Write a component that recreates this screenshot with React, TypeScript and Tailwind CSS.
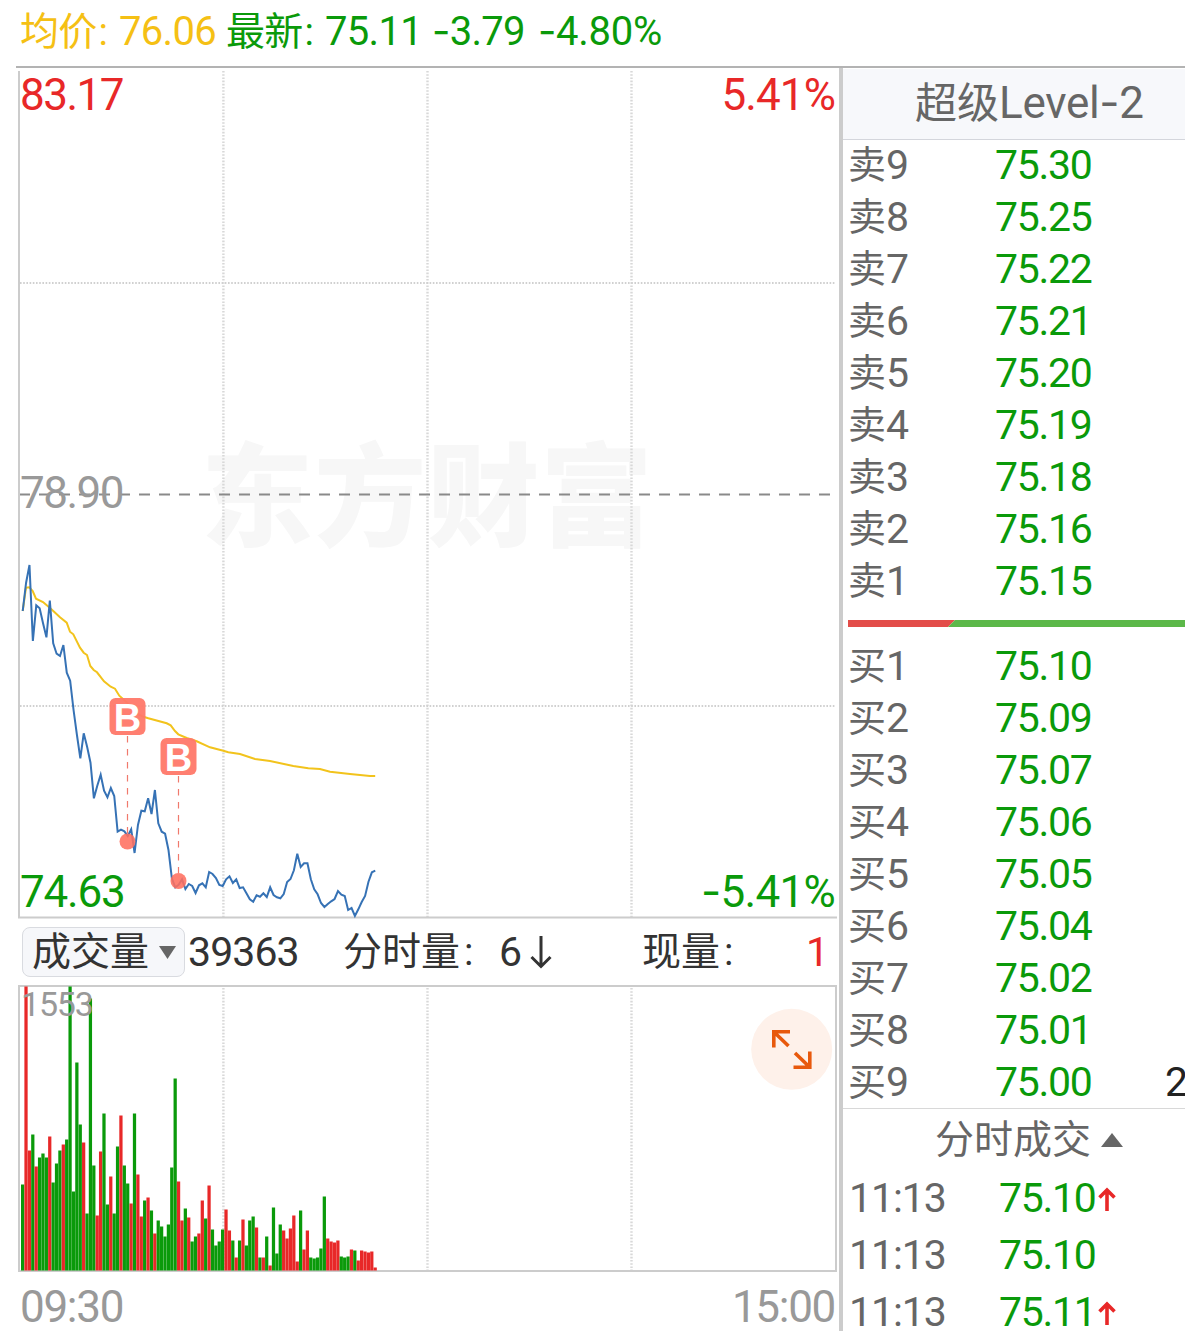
import React from 'react';

const STEP = 3.39;
const START_X = 22.7;
const VOLUME_BASE = 1270.5;

// y position of the last price, one per minute
const PRICE = [
    611, 582.7, 565, 641, 605.3, 608.3, 623.3, 637.3, 600.7, 643.3, 653.7, 656, 645, 672.7, 680.7,
    710, 735, 758.3, 733.3, 746.7, 762.7, 798.3, 785.7, 774.7, 790.7, 797.3, 788, 796, 831.7, 829.7,
    831.3, 836, 829.3, 853, 825, 810.7, 811.3, 798.3, 814, 790, 823.3, 831.7, 833.7, 850, 878.3,
    887.3, 884.7, 879.3, 889, 884, 886, 893, 885.3, 883.3, 887.3, 872, 874, 878, 885, 886,
    879.3, 876.3, 883, 879.3, 888, 887.3, 893.3, 899.3, 901.7, 895.3, 896.7, 893.3, 897, 887.3, 895,
    897.3, 898.3, 894, 882, 879, 870.3, 853.7, 867, 863.3, 863.3, 879.3, 889.3, 894.3, 903, 907,
    904, 901.3, 899, 891, 894.7, 896, 910, 908, 916, 909.3, 902, 896, 881.7, 872.3, 870.7,
];

const AVERAGE =
    '22.7,611 26,587.7 29.3,587.3 32.7,591 36,598.7 43,602 49.7,607.7 53,610.7 60,617.3 66.7,622.7 70,631.7 73.3,634.3 80,647.7 83.7,652.7 87,655 90.3,666 93.7,670 97,672.3 104,681.3 110.7,686.7 115,688.7 119.3,695.7 127.7,703.3 135,712.7 143.3,716.7 148.3,718.3 166.7,723.3 170.7,725.3 175,731 178.3,734.3 186.7,738 196.7,741.3 210,747.3 223.3,750.7 228.3,752.3 240,754 255,759 270,761 293.3,766 308.3,768.3 320,769 330,771.7 350,774 370,776 375.2,776';

// positive = up minute (red), negative = down minute (green)
const VOLUME = [
    -86, 284, 120, -136, 104, -113, -117, -113, 134, -88, -107, -120, 126, -131, -284,
    -79, -208, -146, 128, -57, -272, -105, 55, 119, -157, -66, 94, -57, -124, 155,
    -105, -87, 67, -157, 96, 54, -70, 73, -60, 37, -50, -44, -34, -46, -103,
    -192, 89, 50, -62, 53, -29, -34, 37, 70, -52, 85, -41, -25, -29, -41,
    61, 40, -30, 13, -30, 51, -25, -50, -54, 43, -13, 13, -34, 5, -63,
    -17, -46, 40, 32, 42, 55, 9, -60, 21, 40, -13, -12, -13, -22, -74,
    32, 29, 28, 30, -14, -13, -14, 21, -20, 10, 20, 19, 18, 19, 3,
];

const SELL = ['75.30', '75.25', '75.22', '75.21', '75.20', '75.19', '75.18', '75.16', '75.15'];
const BUY = ['75.10', '75.09', '75.07', '75.06', '75.05', '75.04', '75.02', '75.01', '75.00'];

const TRADES = [
    { time: '11:13', price: '75.10', up: true },
    { time: '11:13', price: '75.10', up: false },
    { time: '11:13', price: '75.11', up: true },
];

const MARKERS = [
    { x: 127.5, top: 698, dot: 841.5 },
    { x: 178.5, top: 738, dot: 881 },
];

const GRID_X = [223.4, 427.5, 631.5];

function Summary() {
    return (
        <header className="flex h-[66px] items-baseline pl-5 text-[40px] leading-[64px] tracking-[-0.7px] whitespace-nowrap text-[#0a9a0a]">
            <span className="w-[99px] text-[39px]">
                <span className="text-[#f5c014]">均价<span className="ml-0.5">:</span></span>
            </span>
            <span className="w-[107px] text-[#f5c014]">76.06</span>
            <span className="w-[99px] text-[39px]">最新<span className="ml-0.5">:</span></span>
            <span className="w-[107px]">75.11</span>
            <span className="w-[106px]"><Minus />3.79</span>
            <span className="tracking-[-0.3px]"><Minus />4.80%</span>
        </header>
    );
}

function Minus() {
    return <span className="font-[Inter] leading-none">-</span>;
}

function PriceChart() {
    const points = PRICE.map((y, i) => `${START_X + i * STEP},${y}`).join(' ');

    return (
        <svg viewBox="16 68 824 852" className="block h-[852px] w-[824px]">
            <text x="201" y="538" fontSize="112" fontWeight="900" letterSpacing="1.2" fill="#f7f7f7" className="font-['Noto_Sans_CJK_SC']">东方财富</text>
            {GRID_X.map((x) => (
                <line key={x} x1={x} y1="71" x2={x} y2="917" stroke="#d8d8d8" strokeWidth="2.4" strokeDasharray="1.6 1.6" />
            ))}
            {[283, 706].map((y) => (
                <line key={y} x1="20" y1={y} x2="836" y2={y} stroke="#d0d0d0" strokeWidth="2" strokeDasharray="1.6 1.6" />
            ))}
            <line x1="19" y1="494.5" x2="836" y2="494.5" stroke="#8a8a8a" strokeWidth="2" strokeDasharray="11 9" />
            <path d="M19 71V917.5H837" fill="none" stroke="#ccc" strokeWidth="2" />

            <polyline points={AVERAGE} fill="none" stroke="#f2c31c" strokeWidth="2" />
            <polyline points={points} fill="none" stroke="#3672b5" strokeWidth="2" />

            {MARKERS.map((m) => (
                <g key={m.x}>
                    <line x1={m.x} y1={m.top + 38} x2={m.x} y2={m.dot - 8} stroke="#f0796c" strokeWidth="1.2" strokeDasharray="6.5 6.5" />
                    <circle cx={m.x} cy={m.dot} r="8" fill="#ff6f60" fillOpacity="0.88" />
                    <rect x={m.x - 18} y={m.top} width="36" height="37" rx="6" fill="#ff7869" fillOpacity="0.95" />
                    <text x={m.x} y={m.top + 32.5} textAnchor="middle" fontSize="38" fontWeight="700" fill="#fff" className="font-['Liberation_Sans']">B</text>
                </g>
            ))}

            <g fontSize="44" letterSpacing="-1.5">
                <text x="20" y="110" fill="#e82828">83.17</text>
                <text x="835" y="110" textAnchor="end" letterSpacing="-0.9" fill="#e82828">5.41%</text>
                <text x="20" y="508" fill="#999">78.90</text>
                <text x="20" y="907" letterSpacing="-1.2" fill="#0a9a0a">74.63</text>
                <text x="835" y="907" textAnchor="end" letterSpacing="-0.7" fill="#0a9a0a"><tspan className="font-[Inter]">-</tspan>5.41%</text>
            </g>
        </svg>
    );
}

function VolumeBar() {
    return (
        <div className="flex h-[64px] items-center pl-1.5 text-[41px] leading-[50px] whitespace-nowrap text-[#333]">
            <button className="flex h-[50px] w-[163px] items-center rounded-lg border border-[#d9dbe0] bg-[#f6f7fa] pl-[9px] text-[39px] leading-[48px]">
                成交量
                <svg viewBox="0 0 17 13" className="ml-2.5 h-[13px] w-[17px]">
                    <path d="M0 0H17L8.5 13Z" fill="#666" />
                </svg>
            </button>
            <span className="ml-[3px] w-[155px] tracking-[-0.9px]">39363</span>
            <span className="w-[156px] text-[39px]">分时量<span className="ml-1">:</span></span>
            <span className="w-[31px]">6</span>
            <svg viewBox="0 0 22 34" className="h-[34px] w-[22px]" fill="none" stroke="#333" strokeWidth="3">
                <path d="M11 1V31M1.5 22L11 31.5L20.5 22" />
            </svg>
            <span className="ml-[90px] w-[164px] text-[39px]">现量<span className="ml-1">:</span></span>
            <span className="text-[#e82828]">1</span>
        </div>
    );
}

function VolumeChart() {
    return (
        <svg viewBox="16 984 824 289" className="block h-[289px] w-[824px]">
            {GRID_X.map((x) => (
                <line key={x} x1={x} y1="988" x2={x} y2="1270" stroke="#d8d8d8" strokeWidth="2.4" strokeDasharray="1.6 1.6" />
            ))}
            <rect x="19" y="986" width="817" height="285" fill="none" stroke="#ccc" strokeWidth="2" />
            {VOLUME.map((v, i) => (
                <rect
                    key={i}
                    x={START_X + i * STEP - 1.7}
                    y={VOLUME_BASE - Math.abs(v)}
                    width="3.25"
                    height={Math.abs(v)}
                    fill={v > 0 ? '#e82828' : '#0a9a0a'}
                />
            ))}
            <text x="21" y="1016" fontSize="34" letterSpacing="-1.2" fill="#999">1553</text>

            <circle cx="791.7" cy="1049.3" r="40.5" fill="#fef1ea" />
            <g fill="none" stroke="#e8590c" strokeWidth="3.6">
                <path d="M790 1031.8H773.8V1047.5M774 1032L788.5 1046" />
                <path d="M793.5 1067.2H809.8V1051.5M809.5 1067L795 1053" />
            </g>
        </svg>
    );
}

function QuoteRow({ label, level, price, amount }: { label: string; level: number; price: string; amount?: string }) {
    return (
        <div className="flex h-[52px] items-baseline text-[41px] leading-[52px] whitespace-nowrap">
            <span className="w-[147px] shrink-0 text-[#666]">
                <span className="align-[1px] text-[38px] leading-none">{label}</span>
                {level}
            </span>
            <span className="w-[170px] shrink-0 tracking-[-1.3px] text-[#0a9a0a]">{price}</span>
            {amount && <span className="text-[#222]">{amount}</span>}
        </div>
    );
}

function OrderBook() {
    return (
        <aside className="flex w-[346px] shrink-0 flex-col overflow-hidden border-l-4 border-[#ccc]">
            <div className="mt-px flex h-[71px] shrink-0 items-baseline border-b border-[#d4d6dc] bg-[#f7f8fb] pl-[72px] leading-[69px] whitespace-nowrap text-[#666]">
                <span className="text-[42px]">超级</span>
                <span className="text-[44px] tracking-[-0.3px]">Level<Minus />2</span>
            </div>
            <div className="-mt-px shrink-0 pl-[5px]">
                {SELL.map((price, i) => (
                    <QuoteRow key={price} label="卖" level={9 - i} price={price} />
                ))}
                <div className="flex h-[33px] items-center">
                    <svg viewBox="0 0 337 7" className="h-[7px] w-[337px]">
                        <path d="M0 0H107L100 7H0Z" fill="#e34d49" />
                        <path d="M107 0H337V7H100Z" fill="#5cb849" />
                    </svg>
                </div>
                {BUY.map((price, i) => (
                    <QuoteRow key={price} label="买" level={i + 1} price={price} amount={i === 8 ? '2' : undefined} />
                ))}
            </div>
            <div className="flex h-[62px] shrink-0 items-center border-t border-[#d8d8d8] pl-[92px] text-[39px] leading-[60px] whitespace-nowrap text-[#666]">
                分时成交
                <svg viewBox="0 0 22 14" className="ml-2.5 h-[14px] w-[22px]">
                    <path d="M11 0L22 14H0Z" fill="#666" />
                </svg>
            </div>
            {TRADES.map((t, i) => (
                <div key={i} className="flex h-[57px] shrink-0 items-center pl-1.5 text-[41px] leading-[57px] whitespace-nowrap">
                    <span className="w-[150px] tracking-[-1.1px] text-[#666]">{t.time}</span>
                    <span className="w-[99px] tracking-[-1.3px] text-[#0a9a0a]">{t.price}</span>
                    {t.up && (
                        <svg viewBox="0 0 18 24" className="h-[24px] w-[18px]" fill="none" stroke="#e82828" strokeWidth="3.6">
                            <path d="M9 24V3M1.5 10.5L9 3L16.5 10.5" />
                        </svg>
                    )}
                </div>
            ))}
        </aside>
    );
}

export default function App() {
    return (
        <div className="h-[1331px] w-[1185px] overflow-hidden bg-white font-[Roboto,'Noto_Sans_CJK_SC',sans-serif]">
            <Summary />
            <main className="ml-4 flex h-[1265px] border-t-2 border-[#b3b3b3]">
                <section className="w-[823px] shrink-0">
                    <PriceChart />
                    <VolumeBar />
                    <VolumeChart />
                    <div className="flex justify-between pt-2 pr-1 pl-1 text-[44px] leading-[52px] tracking-[-1.3px] text-[#999]">
                        <span>09:30</span>
                        <span>15:00</span>
                    </div>
                </section>
                <OrderBook />
            </main>
        </div>
    );
}
